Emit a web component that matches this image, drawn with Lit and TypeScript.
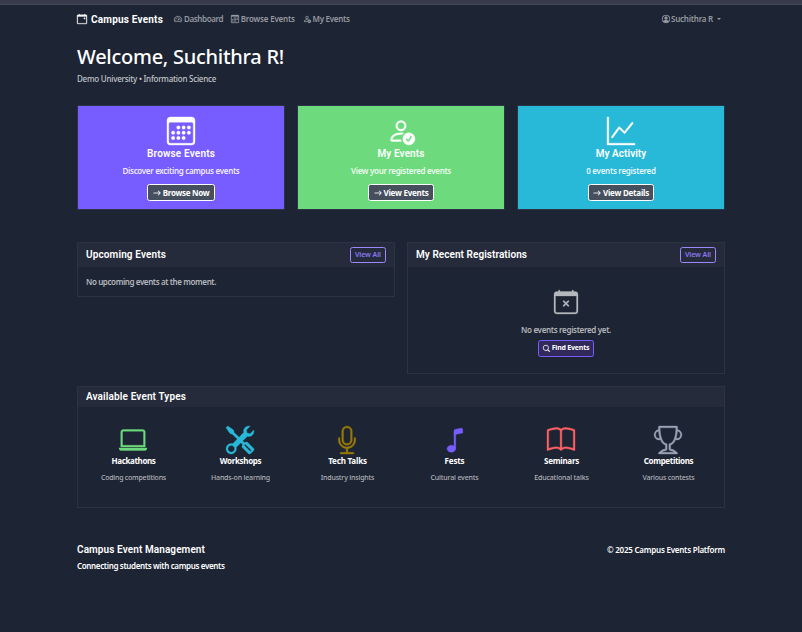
import { LitElement, html, css, svg } from "lit";
import { customElement, property } from "lit/decorators.js";

const CALENDAR_FRAME =
  "M3.5 0a.5.5 0 0 1 .5.5V1h8V.5a.5.5 0 0 1 1 0V1h1a2 2 0 0 1 2 2v11a2 2 0 0 1-2 2H2a2 2 0 0 1-2-2V3a2 2 0 0 1 2-2h1V.5a.5.5 0 0 1 .5-.5zM1 4v10a1 1 0 0 0 1 1h12a1 1 0 0 0 1-1V4H1z";

const ICONS: Record<string, string[]> = {
  event: [
    "M11 6.5a.5.5 0 0 1 .5-.5h1a.5.5 0 0 1 .5.5v1a.5.5 0 0 1-.5.5h-1a.5.5 0 0 1-.5-.5v-1z",
    CALENDAR_FRAME,
  ],
  calendarX: [
    "M6.146 7.146a.5.5 0 0 1 .708 0L8 8.293l1.146-1.147a.5.5 0 1 1 .708.708L8.707 9l1.147 1.146a.5.5 0 0 1-.708.708L8 9.707l-1.146 1.147a.5.5 0 0 1-.708-.708L7.293 9 6.146 7.854a.5.5 0 0 1 0-.708z",
    CALENDAR_FRAME,
  ],
  calendar: [
    "M14 0H2a2 2 0 0 0-2 2v12a2 2 0 0 0 2 2h12a2 2 0 0 0 2-2V2a2 2 0 0 0-2-2zM1 3.857C1 3.384 1.448 3 2 3h12c.552 0 1 .384 1 .857v10.286c0 .473-.448.857-1 .857H2c-.552 0-1-.384-1-.857V3.857z",
    "M6.5 7a1 1 0 1 0 0-2 1 1 0 0 0 0 2zm3 0a1 1 0 1 0 0-2 1 1 0 0 0 0 2zm3 0a1 1 0 1 0 0-2 1 1 0 0 0 0 2zm-9 3a1 1 0 1 0 0-2 1 1 0 0 0 0 2zm3 0a1 1 0 1 0 0-2 1 1 0 0 0 0 2zm3 0a1 1 0 1 0 0-2 1 1 0 0 0 0 2zm3 0a1 1 0 1 0 0-2 1 1 0 0 0 0 2zm-9 3a1 1 0 1 0 0-2 1 1 0 0 0 0 2zm3 0a1 1 0 1 0 0-2 1 1 0 0 0 0 2zm3 0a1 1 0 1 0 0-2 1 1 0 0 0 0 2z",
  ],
  personCheck: [
    "M12.5 16a3.5 3.5 0 1 0 0-7 3.5 3.5 0 0 0 0 7Zm1.679-4.493-1.335 2.226a.75.75 0 0 1-1.174.144l-.774-.773a.5.5 0 0 1 .708-.708l.547.548 1.17-1.951a.5.5 0 1 1 .858.514ZM11 5a3 3 0 1 1-6 0 3 3 0 0 1 6 0ZM8 7a2 2 0 1 0 0-4 2 2 0 0 0 0 4Z",
    "M8.256 14a4.474 4.474 0 0 1-.229-1.004H3c.001-.246.154-.986.832-1.664C4.484 10.68 5.711 10 8 10c.26 0 .507.009.74.025.226-.341.496-.65.804-.918C9.077 9.038 8.564 9 8 9c-5 0-6 3-6 4s1 1 1 1h5.256Z",
  ],
  graph: [
    "M0 0h1v15h15v1H0V0Zm14.817 3.113a.5.5 0 0 1 .07.704l-4.5 5.5a.5.5 0 0 1-.74.037L7.06 6.767l-3.656 5.027a.5.5 0 0 1-.808-.588l4-5.5a.5.5 0 0 1 .758-.06l2.609 2.61 4.15-5.073a.5.5 0 0 1 .704-.07Z",
  ],
  speedometer: [
    "M8 4a.5.5 0 0 1 .5.5V6a.5.5 0 0 1-1 0V4.5A.5.5 0 0 1 8 4zM3.732 5.732a.5.5 0 0 1 .707 0l.915.914a.5.5 0 1 1-.708.708l-.914-.915a.5.5 0 0 1 0-.707zM2 10a.5.5 0 0 1 .5-.5h1.586a.5.5 0 0 1 0 1H2.5A.5.5 0 0 1 2 10zm9.5 0a.5.5 0 0 1 .5-.5h1.5a.5.5 0 0 1 0 1H12a.5.5 0 0 1-.5-.5zm.754-4.246a.389.389 0 0 0-.527-.02L7.547 9.31a.91.91 0 1 0 1.302 1.258l3.434-4.297a.389.389 0 0 0-.029-.518z",
    "M0 10a8 8 0 1 1 15.547 2.661c-.442 1.253-1.845 1.602-2.932 1.25C11.309 13.488 9.475 13 8 13c-1.474 0-3.31.488-4.615.911-1.087.352-2.49.003-2.932-1.25A7.988 7.988 0 0 1 0 10zm8-7a7 7 0 0 0-6.603 9.329c.203.575.923.876 1.68.63C4.397 12.533 6.358 12 8 12s3.604.532 4.923.96c.757.245 1.477-.056 1.68-.631A7 7 0 0 0 8 3z",
  ],
  person: [
    "M11 6a3 3 0 1 1-6 0 3 3 0 0 1 6 0z",
    "M0 8a8 8 0 1 1 16 0A8 8 0 0 1 0 8zm8-7a7 7 0 0 0-5.468 11.37C3.242 11.226 4.805 10 8 10s4.757 1.225 5.468 2.37A7 7 0 0 0 8 1z",
  ],
  arrow: [
    "M1 8a.5.5 0 0 1 .5-.5h11.793l-3.147-3.146a.5.5 0 0 1 .708-.708l4 4a.5.5 0 0 1 0 .708l-4 4a.5.5 0 0 1-.708-.708L13.293 8.5H1.5A.5.5 0 0 1 1 8z",
  ],
  search: [
    "M11.742 10.344a6.5 6.5 0 1 0-1.397 1.398h-.001c.03.04.062.078.098.115l3.85 3.85a1 1 0 0 0 1.415-1.414l-3.85-3.85a1.007 1.007 0 0 0-.115-.1zM12 6.5a5.5 5.5 0 1 1-11 0 5.5 5.5 0 0 1 11 0z",
  ],
  laptop: [
    "M13.5 3a.5.5 0 0 1 .5.5V11H2V3.5a.5.5 0 0 1 .5-.5h11zm-11-1A1.5 1.5 0 0 0 1 3.5V12h14V3.5A1.5 1.5 0 0 0 13.5 2h-11zM0 12.5h16a1.5 1.5 0 0 1-1.5 1.5h-13A1.5 1.5 0 0 1 0 12.5z",
  ],
  tools: [
    "M1 0 0 1l2.2 3.081a1 1 0 0 0 .815.419h.07a1 1 0 0 1 .708.293l2.675 2.675-2.617 2.654A3.003 3.003 0 0 0 0 13a3 3 0 1 0 5.878-.851l2.654-2.617.968.968-.305.914a1 1 0 0 0 .242 1.023l3.27 3.27a.997.997 0 0 0 1.414 0l1.586-1.586a.997.997 0 0 0 0-1.414l-3.27-3.27a1 1 0 0 0-1.023-.242L10.5 9.5l-.96-.96 2.68-2.643A3.005 3.005 0 0 0 16 3c0-.269-.035-.53-.102-.777l-2.14 2.141L12 4l-.364-1.757L13.777.102a3 3 0 0 0-3.675 3.68L7.462 6.46 4.793 3.793a1 1 0 0 1-.293-.707v-.071a1 1 0 0 0-.419-.814L1 0Zm9.646 10.646a.5.5 0 0 1 .708 0l2.914 2.915a.5.5 0 0 1-.707.707l-2.915-2.914a.5.5 0 0 1 0-.708ZM3 11l.471.242.529.026.287.445.445.287.026.529L5 13l-.242.471-.026.529-.445.287-.287.445-.529.026L3 15l-.471-.242L2 14.732l-.287-.445L1.268 14l-.026-.529L1 13l.242-.471.026-.529.445-.287.287-.445.529-.026L3 11Z",
  ],
  mic: [
    "M3.5 6.5A.5.5 0 0 1 4 7v1a4 4 0 0 0 8 0V7a.5.5 0 0 1 1 0v1a5 5 0 0 1-4.5 4.975V15h3a.5.5 0 0 1 0 1h-7a.5.5 0 0 1 0-1h3v-2.025A5 5 0 0 1 3 8V7a.5.5 0 0 1 .5-.5z",
    "M10 8a2 2 0 1 1-4 0V3a2 2 0 1 1 4 0v5zM8 0a3 3 0 0 0-3 3v5a3 3 0 0 0 6 0V3a3 3 0 0 0-3-3z",
  ],
  music: [
    "M9 13c0 1.105-1.12 2-2.5 2S4 14.105 4 13s1.12-2 2.5-2 2.5.895 2.5 2z",
    "M9 3v10H8V3h1z",
    "M8 2.82a1 1 0 0 1 .804-.98l3-.6A1 1 0 0 1 13 2.22V4L8 5V2.82z",
  ],
  book: [
    "M1 2.828c.885-.37 2.154-.769 3.388-.893 1.33-.134 2.458.063 3.112.752v9.746c-.935-.53-2.12-.603-3.213-.493-1.18.12-2.37.461-3.287.811V2.828zm7.5-.141c.654-.689 1.782-.886 3.112-.752 1.234.124 2.503.523 3.388.893v9.923c-.918-.35-2.107-.692-3.287-.81-1.094-.111-2.278-.039-3.213.492V2.687zM8 1.783C7.015.936 5.587.81 4.287.94c-1.514.153-3.042.672-3.994 1.105A.5.5 0 0 0 0 2.5v11a.5.5 0 0 0 .707.455c.882-.4 2.303-.881 3.68-1.02 1.409-.142 2.59.087 3.223.877a.5.5 0 0 0 .78 0c.633-.79 1.814-1.019 3.222-.877 1.378.139 2.8.62 3.681 1.02A.5.5 0 0 0 16 13.5v-11a.5.5 0 0 0-.293-.455c-.952-.433-2.48-.952-3.994-1.105C10.413.809 8.985.936 8 1.783z",
  ],
  trophy: [
    "M2.5.5A.5.5 0 0 1 3 0h10a.5.5 0 0 1 .5.5c0 .538-.012 1.05-.034 1.536a3 3 0 1 1-1.133 5.89c-.79 1.865-1.878 2.777-2.833 3.011v2.173l1.425.356c.194.048.377.135.537.255L13.3 15.1a.5.5 0 0 1-.3.9H3a.5.5 0 0 1-.3-.9l1.838-1.379c.16-.12.343-.207.537-.255L6.5 13.11v-2.173c-.955-.234-2.043-1.146-2.833-3.012a3 3 0 1 1-1.132-5.89A33.076 33.076 0 0 1 2.5.5zm.099 2.54a2 2 0 0 0 .72 3.935c-.333-1.05-.588-2.346-.72-3.935zm10.083 3.935a2 2 0 0 0 .72-3.935c-.133 1.59-.388 2.885-.72 3.935zM3.504 1c.007.517.026 1.006.056 1.469.13 2.028.457 3.546.87 4.667C5.294 9.48 6.484 10 7 10a.5.5 0 0 1 .5.5v2.61a1 1 0 0 1-.757.97l-1.426.356a.5.5 0 0 0-.179.085L4.5 15h7l-.638-.479a.501.501 0 0 0-.18-.085l-1.425-.356a1 1 0 0 1-.757-.97V10.5A.5.5 0 0 1 9 10c.516 0 1.706-.52 2.57-2.864.413-1.12.74-2.64.87-4.667.03-.463.049-.952.056-1.469H3.504z",
  ],
};

const icon = (name: string, size: number) => html`<svg
  class="icon"
  width=${size}
  height=${size}
  viewBox="0 0 16 16"
  fill="currentColor"
  stroke="currentColor"
  stroke-width=${size > 12 ? 0.2 : 0.5}
  aria-hidden="true"
>
  ${ICONS[name].map((d) => svg`<path fill-rule="evenodd" d=${d}></path>`)}
</svg>`;

/** A single line of text whose tracking is adjusted to fill a set width. */
@customElement("fit-text")
class FitText extends LitElement {
  static styles = css`
    :host {
      display: block;
      flex: none;
      white-space: nowrap;
    }
    .line {
      display: inline-block;
      vertical-align: top;
    }
  `;
  @property() text = "";
  @property({ type: Number }) width = 0;

  render() {
    return html`<span class="line">${this.text}</span>`;
  }

  updated() {
    const line = this.renderRoot.querySelector(".line") as HTMLElement;
    line.style.letterSpacing = "0px";
    const natural = line.getBoundingClientRect().width;
    line.style.letterSpacing = `${(this.width - natural) / this.text.length}px`;
    this.style.width = `${this.width}px`;
  }
}

const fit = (text: string, width: number, cls = "") =>
  html`<fit-text class=${cls} .text=${text} .width=${width}></fit-text>`;

const ACTIONS = [
  { tone: "violet", icon: "calendar", title: "Browse Events", tw: 68, desc: "Discover exciting campus events", dw: 117, label: "Browse Now", lw: 46.5, bw: 68 },
  { tone: "green", icon: "personCheck", title: "My Events", tw: 47, desc: "View your registered events", dw: 100, label: "View Events", lw: 45, bw: 66 },
  { tone: "cyan", icon: "graph", title: "My Activity", tw: 50.5, desc: "0 events registered", dw: 69.5, label: "View Details", lw: 46, bw: 66 },
];

const TYPES = [
  { tone: "t-green", icon: "laptop", title: "Hackathons", tw: 44, desc: "Coding competitions", dw: 65 },
  { tone: "t-cyan", icon: "tools", title: "Workshops", tw: 41.5, desc: "Hands-on learning", dw: 59 },
  { tone: "t-gold", icon: "mic", title: "Tech Talks", tw: 38.5, desc: "Industry insights", dw: 53.5 },
  { tone: "t-violet", icon: "music", title: "Fests", tw: 20, desc: "Cultural events", dw: 48 },
  { tone: "t-red", icon: "book", title: "Seminars", tw: 35, desc: "Educational talks", dw: 54.5 },
  { tone: "t-gray", icon: "trophy", title: "Competitions", tw: 49.5, desc: "Various contests", dw: 52 },
];

@customElement("app-root")
class AppRoot extends LitElement {
  static styles = css`
    :host {
      display: block;
      box-sizing: border-box;
      height: 632px;
      overflow: hidden;
      background: #1d2433;
      color: #fff;
      font: 600 8px/12px "Noto Sans", sans-serif;
    }
    *, *::before, *::after { box-sizing: border-box; }
    h1, h2, h3, p { margin: 0; font: inherit; }
    .icon { display: block; flex: none; overflow: visible; }
    .chrome { height: 5px; background: #393b4b; border-bottom: 1px solid #444656; }
    .page { width: 648px; margin: 0 auto; }
    .nav { display: flex; align-items: center; height: 28px; color: #9699a0; }
    .brand, .head, .action .title, .footer .name { font-family: Roboto, "Noto Sans", sans-serif; }
    .brand { display: flex; align-items: center; gap: 4px; margin-right: 11px; color: #fff; font-size: 10px; font-weight: 700; }
    .brand fit-text { padding-top: 1px; }
    .link { display: flex; align-items: center; gap: 2px; margin-right: 7.8px; }
    .user { margin-left: auto; margin-right: 4px; gap: 1.5px; }
    .caret { margin-left: 2.5px; border: 2.4px solid transparent; border-top-color: currentColor; border-bottom: 0; }
    .hero { padding-top: 12px; }
    .hero .title { font-size: 20px; font-weight: 500; line-height: 24px; }
    .hero .sub { margin-top: 4px; color: #c3c6cb; font-weight: 500; }
    .cards { display: grid; grid-template-columns: repeat(3, 1fr); gap: 12px; margin-top: 20px; }
    .action { display: flex; flex-direction: column; align-items: center; height: 105px; padding-top: 11px; border: 1px solid #2b3446; }
    .violet { background: #775dff; }
    .green { background: #6cda7d; }
    .cyan { background: #29b9d8; }
    .action .title { margin-top: 3px; font-size: 10px; font-weight: 600; }
    .action .desc { margin-top: 5px; color: rgba(255, 255, 255, 0.9); }
    .btn { display: flex; align-items: center; justify-content: center; border: 1px solid; border-radius: 2.5px; }
    .btn.light { height: 17px; margin-top: 7px; gap: 2px; background: #464f5e; border-color: #fff; font-weight: 700; }
    .panels { display: grid; grid-template-columns: repeat(2, 1fr); gap: 12px; align-items: start; margin-top: 32px; }
    .panel { border: 1px solid #2d3343; }
    .head { display: flex; align-items: center; justify-content: space-between; height: 24px; padding: 0 8px; background: #252b3a; font-size: 10px; font-weight: 600; }
    .btn.outline { width: 36px; height: 16px; border-color: #9c88fb; color: #8a77ef; font-family: "Noto Sans", sans-serif; font-size: 7px; }
    .muted { color: #b4b7bc; }
    .upcoming { height: 29px; padding: 9px 8px 0; }
    .recent { display: flex; flex-direction: column; align-items: center; height: 106px; padding-top: 23px; }
    .recent .none { margin-top: 10px; color: #b4b7bc; }
    .btn.find { width: 56px; height: 17px; margin-top: 4px; gap: 2px; padding-bottom: 1px; background: #30295a; border-color: #775dff; font-size: 7px; font-weight: 700; }
    .types { height: 122px; margin-top: 12px; }
    .types .head { height: 20px; }
    .grid { display: grid; grid-template-columns: repeat(6, 107px); justify-content: center; padding-top: 19px; }
    .type { display: flex; flex-direction: column; align-items: center; }
    .type .icon { margin-right: 1px; }
    .type .title { margin-top: 1px; color: #fff; font-weight: 700; }
    .type .desc { margin-top: 5px; color: #b0b3b9; font-size: 7px; font-weight: 500; }
    .t-green { color: #6cda7d; }
    .t-cyan { color: #29b9d8; }
    .t-gold { color: #9a7a07; }
    .t-violet { color: #775dff; }
    .t-red { color: #ff6164; }
    .t-gray { color: #9aa3b5; }
    .footer { display: flex; justify-content: space-between; margin-top: 36px; }
    .footer .name { font-size: 10px; }
    .footer .tag { margin-top: 4px; }
  `;

  render() {
    return html`
      <div class="chrome"></div>
      <div class="page">
        <nav class="nav">
          <div class="brand">${icon("event", 10)}${fit("Campus Events", 72)}</div>
          <div class="link">${icon("speedometer", 8)}${fit("Dashboard", 39)}</div>
          <div class="link">${icon("calendar", 8)}${fit("Browse Events", 54)}</div>
          <div class="link">${icon("personCheck", 8)}${fit("My Events", 37)}</div>
          <div class="link user">
            ${icon("person", 8)}${fit("Suchithra R", 42)}<span class="caret"></span>
          </div>
        </nav>
        <header class="hero">
          <h1>${fit("Welcome, Suchithra R!", 207, "title")}</h1>
          <p>${fit("Demo University • Information Science", 139, "sub")}</p>
        </header>
        <section class="cards">
          ${ACTIONS.map(
            (a) => html`<article class="action ${a.tone}">
              ${icon(a.icon, 28)} ${fit(a.title, a.tw, "title")} ${fit(a.desc, a.dw, "desc")}
              <div class="btn light" style="width:${a.bw}px">${icon("arrow", 8)}${fit(a.label, a.lw)}</div>
            </article>`
          )}
        </section>
        <section class="panels">
          <article class="panel">
            <div class="head">
              ${fit("Upcoming Events", 80)}
              <div class="btn outline">${fit("View All", 26)}</div>
            </div>
            <div class="upcoming muted">${fit("No upcoming events at the moment.", 130)}</div>
          </article>
          <article class="panel">
            <div class="head">
              ${fit("My Recent Registrations", 111)}
              <div class="btn outline">${fit("View All", 26)}</div>
            </div>
            <div class="recent">
              <span class="muted">${icon("calendarX", 24)}</span>
              ${fit("No events registered yet.", 90, "none")}
              <div class="btn find">${icon("search", 7)}${fit("Find Events", 37.5)}</div>
            </div>
          </article>
        </section>
        <section class="panel types">
          <div class="head">${fit("Available Event Types", 100)}</div>
          <div class="grid">
            ${TYPES.map(
              (t) => html`<div class="type ${t.tone}">
                ${icon(t.icon, 28)} ${fit(t.title, t.tw, "title")} ${fit(t.desc, t.dw, "desc")}
              </div>`
            )}
          </div>
        </section>
        <footer class="footer">
          <div>
            ${fit("Campus Event Management", 128, "name")}
            ${fit("Connecting students with campus events", 147.5, "tag")}
          </div>
          ${fit("© 2025 Campus Events Platform", 118)}
        </footer>
      </div>
    `;
  }
}
